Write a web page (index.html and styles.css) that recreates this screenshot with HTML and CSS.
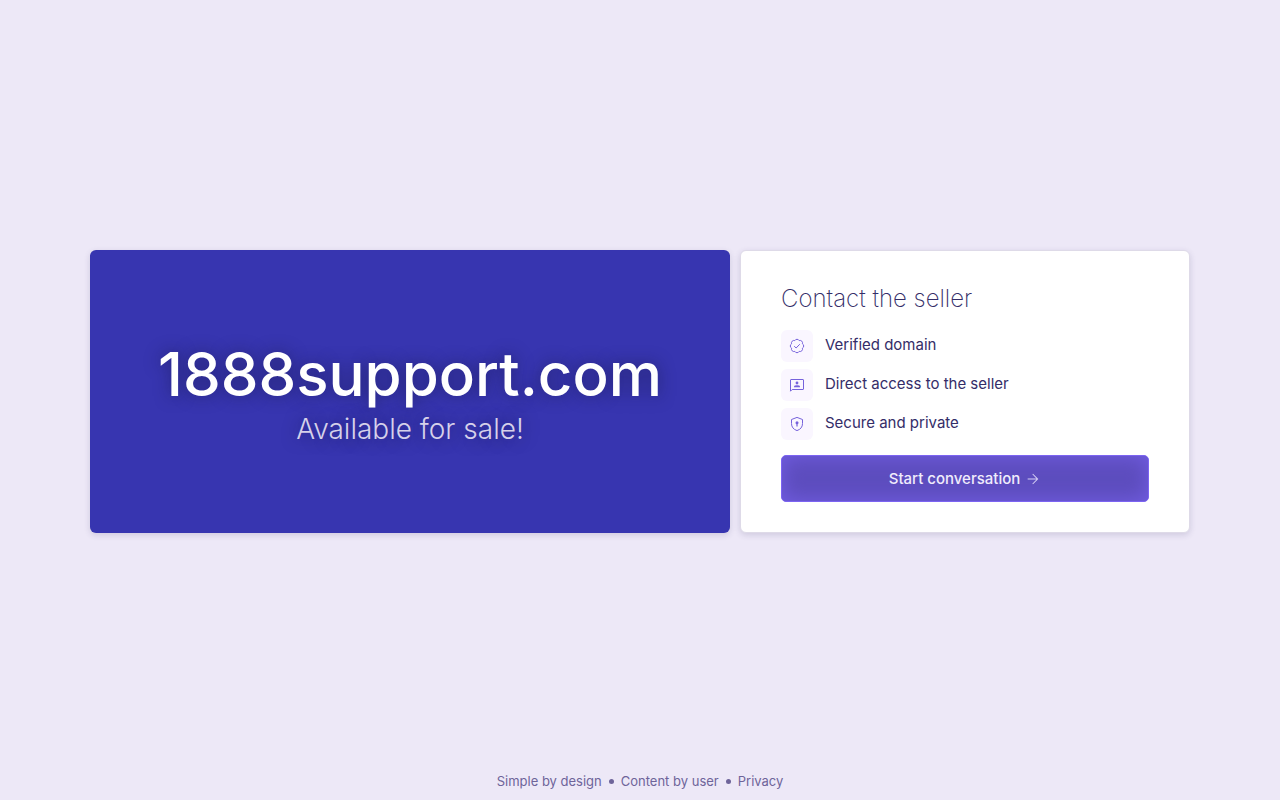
FILE: index.html
```html
<!DOCTYPE html>
<html lang="en">
<head>
<meta charset="utf-8">
<meta name="viewport" content="width=device-width, initial-scale=1">
<title>1888support.com</title>
<link rel="stylesheet" href="styles.css">
</head>
<body>
<main class="page">
  <div class="offer">
    <section class="hero">
      <h1 class="domain">1888support.com</h1>
      <p class="tagline">Available for sale!</p>
    </section>
    <section class="contact">
      <h2 class="contact-title">Contact the seller</h2>
      <ul class="features">
        <li class="feature">
          <span class="badge"><svg class="icon" viewBox="0 0 16 16" aria-hidden="true"><path d="M5.8 2.6A2.5 2.5 0 0 1 10.2 2.6A2.5 2.5 0 0 1 13.4 5.8A2.5 2.5 0 0 1 13.4 10.2A2.5 2.5 0 0 1 10.2 13.4A2.5 2.5 0 0 1 5.8 13.4A2.5 2.5 0 0 1 2.6 10.2A2.5 2.5 0 0 1 2.6 5.8A2.5 2.5 0 0 1 5.8 2.6Z"/><path d="M5.2 8.2 7.1 10 10.8 6.2"/></svg></span>
          <span class="feature-text">Verified domain</span>
        </li>
        <li class="feature">
          <span class="badge"><svg class="icon" viewBox="0 0 16 16" aria-hidden="true"><path d="M1.5 14.2V3Q1.5 2.5 2 2.5H14Q14.5 2.5 14.5 3V12Q14.5 12.5 14 12.5H3.2Z"/><circle class="solid" cx="8" cy="6" r="1.4"/><path class="solid" d="M5 10.2V9.6Q5 8.3 8 8.3T11 9.6V10.2Z"/></svg></span>
          <span class="feature-text">Direct access to the seller</span>
        </li>
        <li class="feature">
          <span class="badge"><svg class="icon" viewBox="0 0 16 16" aria-hidden="true"><path d="M8 1.4 13.5 3.5V7.5Q13.5 12.7 8 14.6Q2.5 12.7 2.5 7.5V3.5Z"/><circle class="solid" cx="8" cy="6.7" r="1.5"/><path class="solid" d="M7.4 7H8.6V10.5H7.4Z"/></svg></span>
          <span class="feature-text">Secure and private</span>
        </li>
      </ul>
      <button class="start" type="button">Start conversation
        <svg class="arrow" viewBox="0 -960 960 960" aria-hidden="true"><path d="M686-450H160v-60h526L438-758l42-42 320 320-320 320-42-42 248-248Z"/></svg>
      </button>
    </section>
  </div>
</main>
<footer class="footer">
  <a class="footer-link" href="#">Simple by design</a>
  <span class="dot"></span>
  <a class="footer-link" href="#">Content by user</a>
  <span class="dot"></span>
  <a class="footer-link" href="#">Privacy</a>
</footer>
</body>
</html>
```
FILE: styles.css
```css
* { box-sizing: border-box; }
body {
  margin: 0;
  min-height: 100vh;
  display: flex;
  flex-direction: column;
  background: #ede8f7;
  color: #342d68;
  font-family: "Inter", "Liberation Sans", sans-serif;
  font-size: 15px;
  line-height: 24px;
}
.page {
  flex: 1;
  display: flex;
  align-items: center;
  justify-content: center;
  padding: 20px 20px 0;
}
.offer {
  display: grid;
  grid-template-columns: 64fr 45fr;
  gap: 10px;
  width: 100%;
  max-width: 1100px;
}
.hero, .contact {
  border-radius: 6px;
  box-shadow: 0 2px 6px rgba(47, 41, 97, 0.16);
}
.hero {
  display: flex;
  flex-direction: column;
  align-items: center;
  justify-content: center;
  padding: 20px 20px 22px;
  background: #3735b0;
  text-align: center;
  text-shadow: 0 0 16px rgba(20, 20, 50, 0.5);
}
.domain {
  margin: 0;
  color: #fff;
  font-size: 60px;
  line-height: 76px;
  font-weight: 500;
}
.tagline {
  margin: 0;
  color: #d6d1ea;
  font-size: 28px;
  line-height: 34px;
  font-weight: 300;
}
.contact {
  padding: 32px 40px 30px;
  background: #fff;
  border: 1px solid #dedae8;
}
.contact-title {
  margin: 0 0 15px;
  font-size: 24px;
  line-height: 32px;
  font-weight: 200;
}
.features {
  display: grid;
  gap: 7px;
  margin: 0 0 15px;
  padding: 0;
  list-style: none;
}
.feature {
  display: flex;
  align-items: center;
  gap: 12px;
}
.feature-text {
  padding-bottom: 2px;
}
.badge {
  display: grid;
  place-items: center;
  width: 32px;
  height: 32px;
  border-radius: 6px;
  background: #faf6ff;
}
.icon {
  width: 16px;
  height: 16px;
  fill: none;
  stroke: #7662dc;
}
.solid {
  fill: #7662dc;
  stroke: none;
}
.start {
  display: flex;
  align-items: center;
  justify-content: center;
  gap: 5px;
  width: 100%;
  height: 47px;
  padding: 0;
  border: 1px solid #7c64f2;
  border-radius: 5px;
  background: #5d4dbe;
  box-shadow: inset 0 0 20px #735ee4;
  color: #f0ecfc;
  font: inherit;
  font-weight: 500;
}
.arrow {
  width: 16px;
  height: 16px;
  fill: #d6d0f5;
}
.footer {
  display: flex;
  align-items: center;
  justify-content: center;
  gap: 7px;
  padding: 8px 8px 9px;
  font-size: 13px;
  line-height: 20px;
}
.footer-link {
  color: #6e649a;
  text-decoration: none;
}
.dot {
  width: 5px;
  height: 5px;
  border-radius: 50%;
  background: #6e649a;
}
```
